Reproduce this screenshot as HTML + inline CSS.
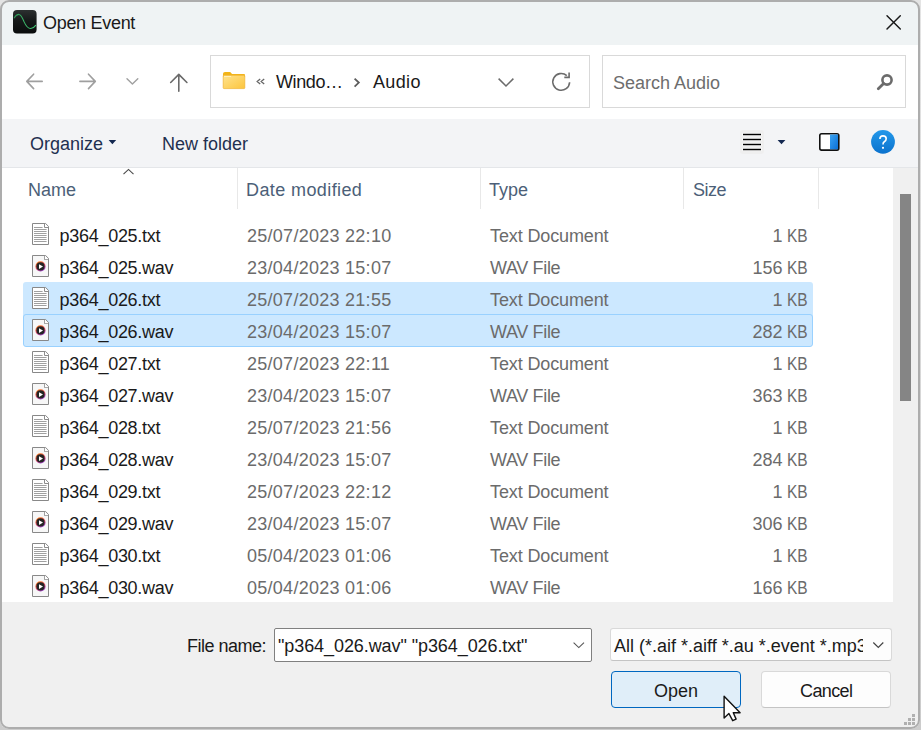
<!DOCTYPE html>
<html><head><meta charset="utf-8">
<style>
*{box-sizing:border-box;margin:0;padding:0}
html,body{width:921px;height:730px;overflow:hidden;background:linear-gradient(#e4e4e4,#cccccc);font-family:"Liberation Sans",sans-serif;font-size:18px;color:#1a1a1a}
.a{position:absolute}
.t{position:absolute;white-space:nowrap;line-height:20px}
#frame{position:absolute;left:0;top:0;width:920px;height:729px;border:2px solid #adadad;border-radius:9px;pointer-events:none}
#win{position:absolute;left:0;top:0;width:920px;height:729px;border-radius:9px;overflow:hidden;background:#f0f0f0}
svg.ov{position:absolute;left:0;top:0}
</style></head><body>
<div id="win">
<div class="a" style="left:2px;top:2px;width:916px;height:43px;background:#eff3f4;"></div>
<div class="a" style="left:2px;top:45px;width:916px;height:74px;background:#ffffff;"></div>
<div class="a" style="left:2px;top:119px;width:916px;height:48px;background:#f3f4f6;"></div>
<div class="a" style="left:2px;top:167px;width:916px;height:1px;background:#e4e6e9;"></div>
<div class="a" style="left:2px;top:168px;width:891px;height:434px;background:#ffffff;"></div>
<div class="a" style="left:893px;top:168px;width:25px;height:434px;background:#f0f0f0;"></div>
<div class="a" style="left:900px;top:194px;width:11px;height:207px;background:#858585;"></div>
<div class="a" style="left:2px;top:602px;width:916px;height:125px;background:#f0f0f0;"></div>
<div class="a" style="left:210px;top:55px;width:380px;height:53px;background:#fff;border:1px solid #d9d9d9"></div>
<div class="a" style="left:602px;top:55px;width:304px;height:53px;background:#fff;border:1px solid #d9d9d9"></div>
<div class="a" style="left:237px;top:168px;width:1px;height:41px;background:#e8e8e8;"></div>
<div class="a" style="left:480px;top:168px;width:1px;height:41px;background:#e8e8e8;"></div>
<div class="a" style="left:683px;top:168px;width:1px;height:41px;background:#e8e8e8;"></div>
<div class="a" style="left:818px;top:168px;width:1px;height:41px;background:#e8e8e8;"></div>
<div class="a" style="left:23px;top:282px;width:790px;height:36px;background:#cce8ff;border-radius:3px 3px 0 0"></div>
<div class="a" style="left:23px;top:314px;width:790px;height:33px;background:#cce8ff;border:1px solid #99d1ff;border-radius:3px"></div>
<div class="a" style="left:274px;top:628px;width:318px;height:34px;background:#fff;border:1px solid #808080;border-radius:2px"></div>
<div class="a" style="left:610px;top:628px;width:282px;height:33px;background:#fdfdfd;border:1px solid #d9d9d9;border-bottom-color:#c4c4c4;border-radius:3px"></div>
<div class="a" style="left:611px;top:671px;width:130px;height:37px;background:#e0eef9;border:1px solid #0067c0;border-radius:4px"></div>
<div class="a" style="left:761px;top:671px;width:130px;height:37px;background:#fdfdfd;border:1px solid #d9d9d9;border-bottom-color:#c4c4c4;border-radius:4px"></div>
<div class="t" style="left:43px;top:13px;color:#1a1a1a;letter-spacing:-0.3px">Open Event</div>
<div class="t" style="left:276px;top:72px;color:#1a1a1a;letter-spacing:-0.4px">Windo…</div>
<div class="t" style="left:373px;top:72px;color:#1a1a1a;letter-spacing:0.35px">Audio</div>
<div class="t" style="left:613px;top:73px;color:#6d6d6d">Search Audio</div>
<div class="t" style="left:30px;top:134px;color:#1f3050">Organize</div>
<div class="t" style="left:162px;top:134px;color:#1f3050">New folder</div>
<div class="t" style="left:28px;top:180px;color:#4c5f78">Name</div>
<div class="t" style="left:246px;top:180px;color:#4c5f78;letter-spacing:0.4px">Date modified</div>
<div class="t" style="left:489px;top:180px;color:#4c5f78">Type</div>
<div class="t" style="left:693px;top:180px;color:#4c5f78;letter-spacing:-0.5px">Size</div>
<div class="t" style="left:59.5px;top:226px;color:#1a1a1a;letter-spacing:-0.28px">p364_025.txt</div>
<div class="t" style="left:247px;top:226px;color:#6b6b6b;letter-spacing:0.27px">25/07/2023 22:10</div>
<div class="t" style="left:490px;top:226px;color:#6b6b6b;letter-spacing:-0.12px">Text Document</div>
<div class="t" style="right:137.5px;top:226px;color:#6b6b6b">1</div>
<div class="t" style="left:787px;top:226px;color:#6b6b6b;transform:scaleX(0.86);transform-origin:0 0">KB</div>
<div class="t" style="left:59.5px;top:258px;color:#1a1a1a;letter-spacing:-0.28px">p364_025.wav</div>
<div class="t" style="left:247px;top:258px;color:#6b6b6b;letter-spacing:0.27px">23/04/2023 15:07</div>
<div class="t" style="left:490px;top:258px;color:#6b6b6b;letter-spacing:-0.35px">WAV File</div>
<div class="t" style="right:137.5px;top:258px;color:#6b6b6b">156</div>
<div class="t" style="left:787px;top:258px;color:#6b6b6b;transform:scaleX(0.86);transform-origin:0 0">KB</div>
<div class="t" style="left:59.5px;top:290px;color:#1a1a1a;letter-spacing:-0.28px">p364_026.txt</div>
<div class="t" style="left:247px;top:290px;color:#6b6b6b;letter-spacing:0.27px">25/07/2023 21:55</div>
<div class="t" style="left:490px;top:290px;color:#6b6b6b;letter-spacing:-0.12px">Text Document</div>
<div class="t" style="right:137.5px;top:290px;color:#6b6b6b">1</div>
<div class="t" style="left:787px;top:290px;color:#6b6b6b;transform:scaleX(0.86);transform-origin:0 0">KB</div>
<div class="t" style="left:59.5px;top:322px;color:#1a1a1a;letter-spacing:-0.28px">p364_026.wav</div>
<div class="t" style="left:247px;top:322px;color:#6b6b6b;letter-spacing:0.27px">23/04/2023 15:07</div>
<div class="t" style="left:490px;top:322px;color:#6b6b6b;letter-spacing:-0.35px">WAV File</div>
<div class="t" style="right:137.5px;top:322px;color:#6b6b6b">282</div>
<div class="t" style="left:787px;top:322px;color:#6b6b6b;transform:scaleX(0.86);transform-origin:0 0">KB</div>
<div class="t" style="left:59.5px;top:354px;color:#1a1a1a;letter-spacing:-0.28px">p364_027.txt</div>
<div class="t" style="left:247px;top:354px;color:#6b6b6b;letter-spacing:0.27px">25/07/2023 22:11</div>
<div class="t" style="left:490px;top:354px;color:#6b6b6b;letter-spacing:-0.12px">Text Document</div>
<div class="t" style="right:137.5px;top:354px;color:#6b6b6b">1</div>
<div class="t" style="left:787px;top:354px;color:#6b6b6b;transform:scaleX(0.86);transform-origin:0 0">KB</div>
<div class="t" style="left:59.5px;top:386px;color:#1a1a1a;letter-spacing:-0.28px">p364_027.wav</div>
<div class="t" style="left:247px;top:386px;color:#6b6b6b;letter-spacing:0.27px">23/04/2023 15:07</div>
<div class="t" style="left:490px;top:386px;color:#6b6b6b;letter-spacing:-0.35px">WAV File</div>
<div class="t" style="right:137.5px;top:386px;color:#6b6b6b">363</div>
<div class="t" style="left:787px;top:386px;color:#6b6b6b;transform:scaleX(0.86);transform-origin:0 0">KB</div>
<div class="t" style="left:59.5px;top:418px;color:#1a1a1a;letter-spacing:-0.28px">p364_028.txt</div>
<div class="t" style="left:247px;top:418px;color:#6b6b6b;letter-spacing:0.27px">25/07/2023 21:56</div>
<div class="t" style="left:490px;top:418px;color:#6b6b6b;letter-spacing:-0.12px">Text Document</div>
<div class="t" style="right:137.5px;top:418px;color:#6b6b6b">1</div>
<div class="t" style="left:787px;top:418px;color:#6b6b6b;transform:scaleX(0.86);transform-origin:0 0">KB</div>
<div class="t" style="left:59.5px;top:450px;color:#1a1a1a;letter-spacing:-0.28px">p364_028.wav</div>
<div class="t" style="left:247px;top:450px;color:#6b6b6b;letter-spacing:0.27px">23/04/2023 15:07</div>
<div class="t" style="left:490px;top:450px;color:#6b6b6b;letter-spacing:-0.35px">WAV File</div>
<div class="t" style="right:137.5px;top:450px;color:#6b6b6b">284</div>
<div class="t" style="left:787px;top:450px;color:#6b6b6b;transform:scaleX(0.86);transform-origin:0 0">KB</div>
<div class="t" style="left:59.5px;top:482px;color:#1a1a1a;letter-spacing:-0.28px">p364_029.txt</div>
<div class="t" style="left:247px;top:482px;color:#6b6b6b;letter-spacing:0.27px">25/07/2023 22:12</div>
<div class="t" style="left:490px;top:482px;color:#6b6b6b;letter-spacing:-0.12px">Text Document</div>
<div class="t" style="right:137.5px;top:482px;color:#6b6b6b">1</div>
<div class="t" style="left:787px;top:482px;color:#6b6b6b;transform:scaleX(0.86);transform-origin:0 0">KB</div>
<div class="t" style="left:59.5px;top:514px;color:#1a1a1a;letter-spacing:-0.28px">p364_029.wav</div>
<div class="t" style="left:247px;top:514px;color:#6b6b6b;letter-spacing:0.27px">23/04/2023 15:07</div>
<div class="t" style="left:490px;top:514px;color:#6b6b6b;letter-spacing:-0.35px">WAV File</div>
<div class="t" style="right:137.5px;top:514px;color:#6b6b6b">306</div>
<div class="t" style="left:787px;top:514px;color:#6b6b6b;transform:scaleX(0.86);transform-origin:0 0">KB</div>
<div class="t" style="left:59.5px;top:546px;color:#1a1a1a;letter-spacing:-0.28px">p364_030.txt</div>
<div class="t" style="left:247px;top:546px;color:#6b6b6b;letter-spacing:0.27px">05/04/2023 01:06</div>
<div class="t" style="left:490px;top:546px;color:#6b6b6b;letter-spacing:-0.12px">Text Document</div>
<div class="t" style="right:137.5px;top:546px;color:#6b6b6b">1</div>
<div class="t" style="left:787px;top:546px;color:#6b6b6b;transform:scaleX(0.86);transform-origin:0 0">KB</div>
<div class="t" style="left:59.5px;top:578px;color:#1a1a1a;letter-spacing:-0.28px">p364_030.wav</div>
<div class="t" style="left:247px;top:578px;color:#6b6b6b;letter-spacing:0.27px">05/04/2023 01:06</div>
<div class="t" style="left:490px;top:578px;color:#6b6b6b;letter-spacing:-0.35px">WAV File</div>
<div class="t" style="right:137.5px;top:578px;color:#6b6b6b">166</div>
<div class="t" style="left:787px;top:578px;color:#6b6b6b;transform:scaleX(0.86);transform-origin:0 0">KB</div>
<div class="t" style="left:187px;top:636px;color:#1a1a1a;letter-spacing:-0.5px">File name:</div>
<div class="t" style="left:278px;top:636px;color:#1a1a1a;letter-spacing:-0.08px">"p364_026.wav" "p364_026.txt"</div>
<div class="a" style="left:611px;top:629px;width:252px;height:31px;overflow:hidden"><div class="t" style="left:3px;top:7px;color:#1a1a1a">All (*.aif *.aiff *.au *.event *.mp3</div></div>
<div class="t" style="left:654px;top:681px;color:#1a1a1a">Open</div>
<div class="t" style="left:800px;top:681px;color:#1a1a1a;letter-spacing:-0.6px">Cancel</div>
<svg class="ov" width="921" height="730" viewBox="0 0 921 730">
<defs>
<linearGradient id="ig" x1="0" y1="0" x2="0" y2="1"><stop offset="0" stop-color="#2c3030"/><stop offset="0.45" stop-color="#161919"/><stop offset="1" stop-color="#0a0c0c"/></linearGradient>
<linearGradient id="fg" x1="0" y1="0" x2="1" y2="1"><stop offset="0" stop-color="#ffe38e"/><stop offset="1" stop-color="#fcc53c"/></linearGradient>
<linearGradient id="pg" x1="0" y1="0" x2="1" y2="1"><stop offset="0" stop-color="#3aa3f2"/><stop offset="1" stop-color="#0a6fd6"/></linearGradient>
<linearGradient id="hg" x1="0" y1="0" x2="0" y2="1"><stop offset="0" stop-color="#2398ea"/><stop offset="1" stop-color="#0b72cd"/></linearGradient>
<linearGradient id="wg" x1="0.25" y1="0" x2="0.75" y2="1"><stop offset="0" stop-color="#ff7a18"/><stop offset="0.5" stop-color="#e8506a"/><stop offset="1" stop-color="#9040d8"/></linearGradient>
<g id="txt"><path d="M0.5 0.5H13.6L16.5 3.4V21.5H0.5Z" fill="#fff" stroke="#888" stroke-width="1"/><path d="M12.5 0.5V4.5H16.5" fill="none" stroke="#8c8c8c" stroke-width="1"/><path d="M2 4.5H10.6M2 6.5H14.6M2 8.5H14.6M2 10.5H14.6M2 12.5H14.6M2 14.5H14.6M2 16.5H14.6M2 18.5H14.6" stroke="#a0a0a0" stroke-width="1"/></g>
<g id="wav"><path d="M0.5 0.5H13.6L16.5 3.4V21.5H0.5Z" fill="#f7f7f7" stroke="#888" stroke-width="1"/><path d="M12.5 0.5V4.5H16.5" fill="none" stroke="#8c8c8c" stroke-width="1"/><path d="M12.8 0.8V4.2H16.2Z" fill="#fff"/><circle cx="8.5" cy="11.4" r="5.1" fill="url(#wg)"/><circle cx="8.5" cy="11.4" r="4.1" fill="#242424"/><path d="M7 9.2V13.9L11 11.6Z" fill="#fff"/></g>
</defs>
<rect x="13" y="10" width="23.6" height="23.6" rx="4" fill="url(#ig)"/>
<linearGradient id="wv" x1="14" y1="0" x2="36" y2="0" gradientUnits="userSpaceOnUse"><stop offset="0" stop-color="#2a8a50"/><stop offset="0.35" stop-color="#38b064"/><stop offset="1" stop-color="#45cc78"/></linearGradient><path d="M14 18.2C15.5 15.6 17.4 14.3 19 14.4C21.4 14.6 22.8 18.8 24.1 21.9C25.5 25.1 27.6 28.5 30.7 28.5C32.9 28.5 34.7 26.7 35.9 25.1" fill="none" stroke="url(#wv)" stroke-width="1.05"/>
<path d="M887 15.8L900.3 29.1M900.3 15.8L887 29.1" stroke="#1a1a1a" stroke-width="1.45" stroke-linecap="round"/>
<path d="M42.2 81.4H27.2M33.6 74.2L26.8 81.4L33.6 88.6" fill="none" stroke="#9f9f9f" stroke-width="1.6" stroke-linecap="round" stroke-linejoin="round"/>
<path d="M79.9 81.4H94.9M88.5 74.2L95.3 81.4L88.5 88.6" fill="none" stroke="#9f9f9f" stroke-width="1.6" stroke-linecap="round" stroke-linejoin="round"/>
<path d="M127 78.8L132.4 84.1L137.8 78.8" fill="none" stroke="#a0a0a0" stroke-width="1.4" stroke-linecap="round" stroke-linejoin="round"/>
<path d="M178.8 91.3V74.5M170.7 82.5L178.8 74.4L186.9 82.5" fill="none" stroke="#6a6a6a" stroke-width="1.6" stroke-linecap="round" stroke-linejoin="round"/>
<path d="M223 73.8Q223 72 225 72H229.6Q230.6 72 231.4 73.2L232 74H244Q245 74 245 75V77H223Z" fill="#f2b416"/>
<rect x="223.2" y="75.2" width="21.6" height="13.4" rx="0.8" fill="url(#fg)" stroke="#efb22e" stroke-width="0.7"/><path d="M224 76.5H231" stroke="#fff3c8" stroke-width="0.8"/>
<path d="M260.2 79.1L257.2 81.5L260.2 83.9M264.2 79.1L261.2 81.5L264.2 83.9" fill="none" stroke="#666" stroke-width="1.3"/>
<path d="M354.6 78.6L358.8 82.6L354.6 86.6" fill="none" stroke="#5c5c5c" stroke-width="1.8"/>
<path d="M498.6 78.6L506 86L513.4 78.6" fill="none" stroke="#6b6b6b" stroke-width="1.5"/>
<path d="M569.6 82.2A8.4 8.4 0 1 1 566.8 75.6" fill="none" stroke="#6b6b6b" stroke-width="1.6"/><path d="M569.1 72.6V77.4H564.3" fill="none" stroke="#6b6b6b" stroke-width="1.6"/>
<circle cx="887" cy="80" r="4.6" fill="none" stroke="#6b6b6b" stroke-width="2.6"/><path d="M883.6 83.5L878.3 88.8" stroke="#6b6b6b" stroke-width="2.8" stroke-linecap="round"/>
<path d="M108.6 140H116.2L112.4 144.3Z" fill="#132850"/>
<rect x="740" y="130" width="24" height="24" rx="3" fill="#efefef"/><path d="M742.5 134.5H761.5M742.5 139.5H761.5M742.5 144.5H761.5M742.5 149.5H761.5" stroke="#fff" stroke-width="3"/><path d="M743 134.5H761M743 139.5H761M743 144.5H761M743 149.5H761" stroke="#000" stroke-width="1.3"/>
<path d="M777.6 140H785.4L781.5 144.3Z" fill="#132850"/>
<rect x="819.8" y="133.7" width="19" height="16.4" rx="1.8" fill="#fff" stroke="#111" stroke-width="1.6"/><rect x="830" y="134.5" width="8" height="14.8" fill="url(#pg)"/>
<circle cx="883" cy="141.8" r="11.9" fill="url(#hg)"/><path d="M879.9 139Q879.9 135.9 883 135.9Q886.2 135.9 886.2 138.8Q886.2 140.6 884.3 141.7Q883 142.5 883 144.4" fill="none" stroke="#fff" stroke-width="1.6"/><circle cx="883" cy="147.8" r="1.1" fill="#fff"/>
<path d="M123.5 174.2L128.5 169.4L133.5 174.2" fill="none" stroke="#4a4a4a" stroke-width="1.1"/>
<use href="#txt" x="32" y="223"/>
<use href="#wav" x="32" y="255"/>
<use href="#txt" x="32" y="287"/>
<use href="#wav" x="32" y="319"/>
<use href="#txt" x="32" y="351"/>
<use href="#wav" x="32" y="383"/>
<use href="#txt" x="32" y="415"/>
<use href="#wav" x="32" y="447"/>
<use href="#txt" x="32" y="479"/>
<use href="#wav" x="32" y="511"/>
<use href="#txt" x="32" y="543"/>
<use href="#wav" x="32" y="575"/>
<path d="M573.6 642.6L578.8 647.6L584 642.6" fill="none" stroke="#555" stroke-width="1.1"/>
<path d="M873.3 642.5L878.3 647.5L883.3 642.5" fill="none" stroke="#444" stroke-width="1.2"/>
<path d="M724.1 696.2V718L728.9 713.5L732.7 720.7L736.1 719.1L733.3 712.7H740.1Z" fill="#fff" stroke="#111" stroke-width="1.4" stroke-linejoin="round"/>
<rect x="912" y="714" width="3" height="3" fill="#b0b0b0"/>
<rect x="908" y="718" width="3" height="3" fill="#b0b0b0"/>
<rect x="912" y="718" width="3" height="3" fill="#b0b0b0"/>
<rect x="904" y="722" width="3" height="3" fill="#b0b0b0"/>
<rect x="908" y="722" width="3" height="3" fill="#b0b0b0"/>
<rect x="912" y="722" width="3" height="3" fill="#b0b0b0"/>
</svg>
</div>
<div id="frame"></div>
</body></html>
